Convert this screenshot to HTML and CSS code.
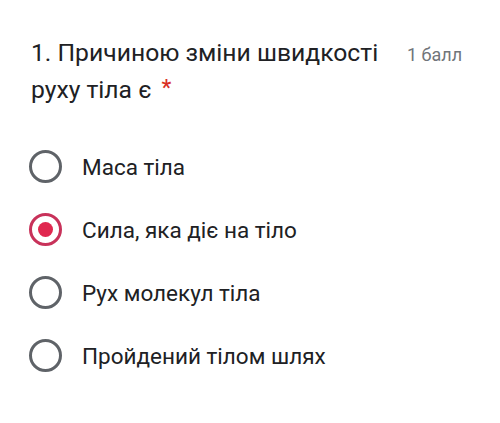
FILE: index.html
```html
<!DOCTYPE html>
<html lang="uk">
<head>
<meta charset="utf-8">
<link rel="stylesheet" href="styles.css">
</head>
<body>
<div class="card">
  <div class="header">
    <div class="title">1. Причиною зміни швидкості руху тіла є<span class="req">*</span></div>
    <div class="points">1 балл</div>
  </div>
  <div class="options">
    <div class="option"><span class="radio"></span><span class="label">Маса тіла</span></div>
    <div class="option"><span class="radio checked"><span class="dot"></span></span><span class="label">Сила, яка діє на тіло</span></div>
    <div class="option"><span class="radio"></span><span class="label">Рух молекул тіла</span></div>
    <div class="option"><span class="radio"></span><span class="label">Пройдений тілом шлях</span></div>
  </div>
</div>
</body>
</html>
```

FILE: styles.css
```css
html, body {
  margin: 0;
  padding: 0;
  background: #ffffff;
}

.card {
  padding: 34px 0 0 31px;
  font-family: Roboto, "Noto Sans", sans-serif;
  color: #202124;
}

.header {
  display: flex;
  align-items: baseline;
}

.title {
  width: 376px;
  font-size: 24.7px;
  line-height: 37px;
  color: #202124;
}

.req {
  color: #d93025;
  font-size: 22px;
  font-weight: 500;
  line-height: 1;
  margin-left: 10px;
  vertical-align: 3px;
}

.points {
  font-size: 18px;
  color: #70757a;
}

.options {
  display: flex;
  flex-direction: column;
  margin-top: 27px;
}

.option {
  display: flex;
  align-items: center;
  height: 63px;
}

.radio {
  box-sizing: border-box;
  width: 33px;
  height: 33px;
  border: 3px solid #5f6368;
  border-radius: 50%;
  margin-left: -2px;
  display: flex;
  align-items: center;
  justify-content: center;
  flex: none;
}

.radio.checked {
  border-color: #c8325a;
}

.dot {
  width: 15px;
  height: 15px;
  border-radius: 50%;
  background: #e0284f;
}

.label {
  margin-left: 20px;
  font-size: 22.5px;
  color: #202124;
}
```
